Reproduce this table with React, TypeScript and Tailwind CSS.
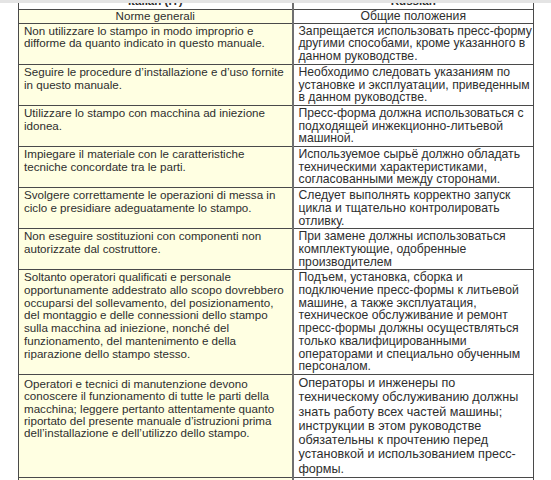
import React from "react";

type Row = { it: string[]; ru: string[]; last?: boolean };

const rows: Row[] = [
  {
    it: ["Non utilizzare lo stampo in modo improprio e", "difforme da quanto indicato in questo manuale."],
    ru: ["Запрещается использовать пресс-форму", "другими способами, кроме указанного в", "данном руководстве."],
  },
  {
    it: ["Seguire le procedure d’installazione e d’uso fornite", "in questo manuale."],
    ru: ["Необходимо следовать указаниям по", "установке и эксплуатации, приведенным", "в данном руководстве."],
  },
  {
    it: ["Utilizzare lo stampo con macchina ad iniezione", "idonea."],
    ru: ["Пресс-форма должна использоваться с", "подходящей инжекционно-литьевой", "машиной."],
  },
  {
    it: ["Impiegare il materiale con le caratteristiche", "tecniche concordate tra le parti."],
    ru: ["Используемое сырьё должно обладать", "техническими характеристиками,", "согласованными между сторонами."],
  },
  {
    it: ["Svolgere correttamente le operazioni di messa in", "ciclo e presidiare adeguatamente lo stampo."],
    ru: ["Следует выполнять корректно запуск", "цикла и тщательно контролировать", "отливку."],
  },
  {
    it: ["Non eseguire sostituzioni con componenti non", "autorizzate dal costruttore."],
    ru: ["При замене должны использоваться", "комплектующие, одобренные", "производителем"],
  },
  {
    it: [
      "Soltanto operatori qualificati e personale",
      "opportunamente addestrato allo scopo dovrebbero",
      "occuparsi del sollevamento, del posizionamento,",
      "del montaggio e delle connessioni dello stampo",
      "sulla macchina ad iniezione, nonché del",
      "funzionamento, del mantenimento e della",
      "riparazione dello stampo stesso.",
    ],
    ru: [
      "Подъем, установка, сборка и",
      "подключение пресс-формы к литьевой",
      "машине, а также эксплуатация,",
      "техническое обслуживание и ремонт",
      "пресс-формы должны осуществляться",
      "только квалифицированными",
      "операторами и специально обученным",
      "персоналом.",
    ],
  },
  {
    it: [
      "Operatori e tecnici di manutenzione devono",
      "conoscere il funzionamento di tutte le parti della",
      "macchina; leggere pertanto attentamente quanto",
      "riportato del presente manuale d’istruzioni prima",
      "dell’installazione e dell’utilizzo dello stampo.",
    ],
    ru: [
      "Операторы и инженеры по",
      "техническому обслуживанию должны",
      "знать работу всех частей машины;",
      "инструкции в этом руководстве",
      "обязательны к прочтению перед",
      "установкой и использованием пресс-",
      "формы.",
    ],
    last: true,
  },
];

function Lines({ lines }: { lines: string[] }) {
  return (
    <>
      {lines.map((l, i) => (
        <div key={i} className="whitespace-nowrap">
          {l}
        </div>
      ))}
    </>
  );
}

export default function App() {
  return (
    <div
      className="w-[551px] h-[480px] overflow-hidden bg-white text-[#2e2e2e]"
      style={{ fontFamily: '"Liberation Sans", Arial, sans-serif' }}
    >
      <div className="h-[3px] bg-[#e4e4e4] relative z-10" />
      <table className="ml-[18px] -mt-[11px] w-[515px] table-fixed border-collapse text-[11.6px] leading-[12.7px]">
        <colgroup>
          <col className="w-[274px]" />
          <col className="w-[241px]" />
        </colgroup>
        <tbody>
          <tr className="h-[17px]">
            <td className="border border-[#4a4a4a] bg-white text-center font-bold">Italian (IT)</td>
            <td className="border border-[#4a4a4a] border-l-2 border-l-[#707070] bg-white text-center font-bold">Russian</td>
          </tr>
          <tr>
            <td className="border border-[#4a4a4a] bg-[#ffffe2] px-[5px] text-center">Norme generali</td>
            <td className="border border-[#4a4a4a] border-l-2 border-l-[#707070] px-[5px] text-center text-[12.2px]">
              Общие положения
            </td>
          </tr>
          {rows.map((r, i) => (
            <tr key={i} className="align-top">
              <td
                className={
                  r.last
                    ? "border border-[#4a4a4a] bg-[#ffffe2] px-[5px] pt-[3px] pb-[1px] leading-[12.3px]"
                    : "border border-[#4a4a4a] bg-[#ffffe2] px-[5px] pt-[1px] pb-[1px]"
                }
              >
                <Lines lines={r.it} />
              </td>
              <td
                className={
                  r.last
                    ? "border border-[#4a4a4a] border-l-2 border-l-[#707070] px-[5px] pt-[1px] pb-[1px] text-[12.6px] leading-[14.3px]"
                    : "border border-[#4a4a4a] border-l-2 border-l-[#707070] px-[5px] pt-[1px] pb-[1px] text-[12.2px]"
                }
              >
                <Lines lines={r.ru} />
              </td>
            </tr>
          ))}
          <tr className="h-[20px]">
            <td className="border border-[#4a4a4a] bg-[#ffffe2]" />
            <td className="border border-[#4a4a4a] border-l-2 border-l-[#707070]" />
          </tr>
        </tbody>
      </table>
    </div>
  );
}
